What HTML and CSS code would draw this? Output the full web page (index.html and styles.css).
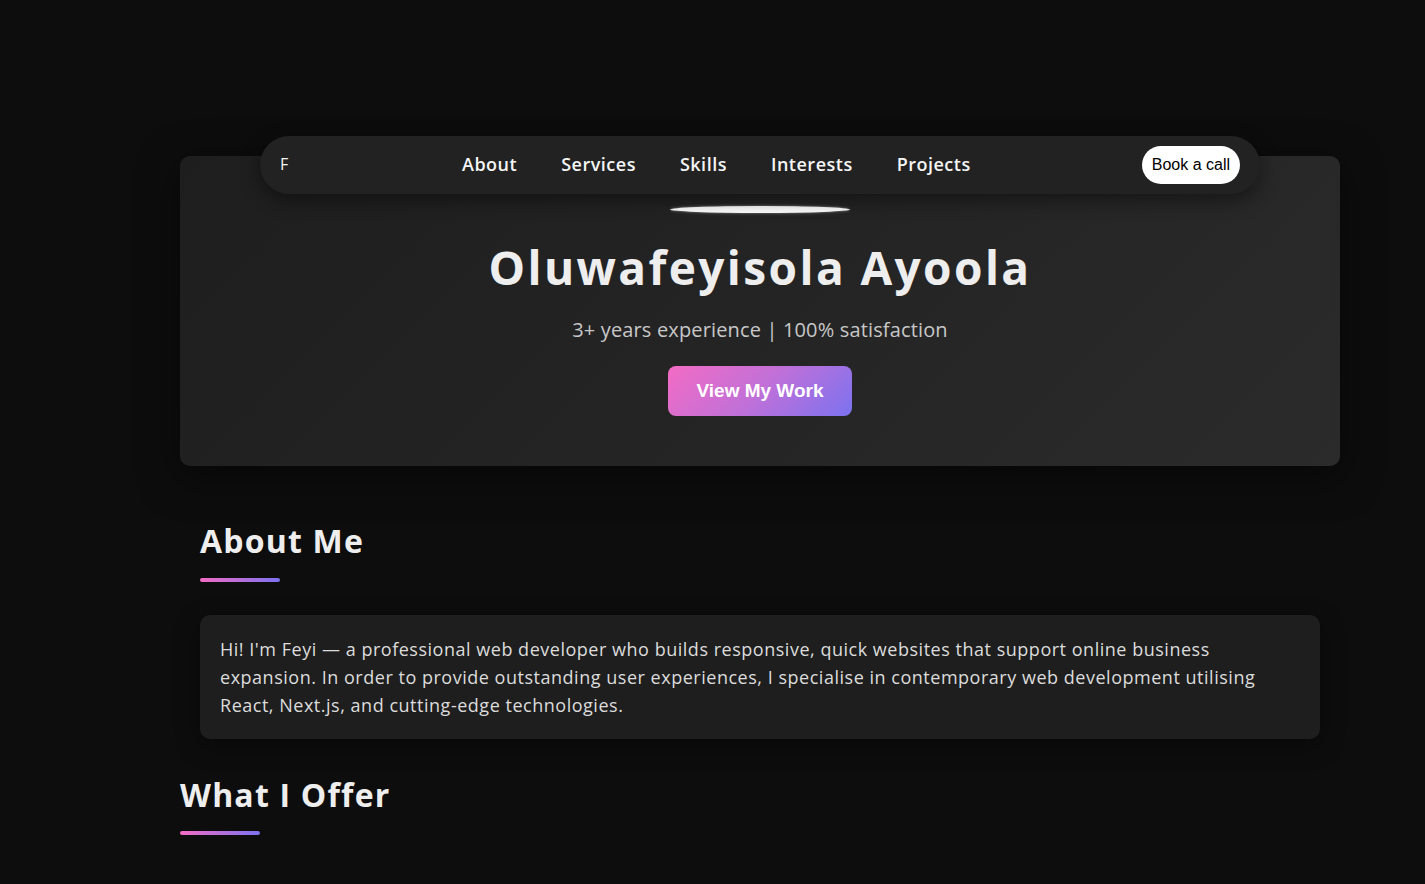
FILE: index.html
```html
<!DOCTYPE html>
<html lang="en">
<head>
<meta charset="utf-8">
<title>Oluwafeyisola Ayoola</title>
<link rel="stylesheet" href="styles.css">
</head>
<body>
<main class="page">
  <section class="hero">
    <nav class="nav">
      <span class="logo">F</span>
      <ul class="links">
        <li><a href="#about">About</a></li>
        <li><a href="#services">Services</a></li>
        <li><a href="#skills">Skills</a></li>
        <li><a href="#interests">Interests</a></li>
        <li><a href="#projects">Projects</a></li>
      </ul>
      <a class="book" href="#call">Book a call</a>
    </nav>
    <div class="glow"></div>
    <h1 class="title">Oluwafeyisola Ayoola</h1>
    <p class="sub">3+ years experience | 100% satisfaction</p>
    <a class="cta" href="#projects">View My Work</a>
  </section>

  <section class="about" id="about">
    <h2 class="heading">About Me</h2>
    <div class="bar"></div>
    <div class="card">
      <p>Hi! I'm Feyi — a professional web developer who builds responsive, quick websites that support online business<br>expansion. In order to provide outstanding user experiences, I specialise in contemporary web development utilising<br>React, Next.js, and cutting-edge technologies.</p>
    </div>
  </section>

  <section class="offer" id="services">
    <h2 class="heading">What I Offer</h2>
    <div class="bar"></div>
  </section>
</main>
</body>
</html>
```

FILE: styles.css
```css
* { box-sizing: border-box; }
html, body { margin: 0; padding: 0; }
body {
  background: #0d0d0d;
  color: #f0f0f0;
  font-family: "Open Sans", "DejaVu Sans", sans-serif;
  overflow: hidden;
}
.page {
  padding: 156px 0 0 180px;
  width: 1340px;
}
.hero {
  position: relative;
  width: 1160px;
  height: 310px;
  border-radius: 10px;
  background: linear-gradient(135deg, #1e1e1e 0%, #242424 50%, #2b2b2b 100%);
  box-shadow: 0 10px 40px rgba(0,0,0,0.5);
  display: flex;
  flex-direction: column;
  align-items: center;
  padding-top: 50px;
}
.nav {
  position: absolute;
  top: -20px;
  left: 80px;
  width: 1000px;
  height: 58px;
  border-radius: 29px;
  background: #222222;
  box-shadow: 0 6px 20px rgba(0,0,0,0.45);
  display: flex;
  align-items: center;
  padding: 0 20px;
}
.logo {
  font-size: 16px;
  font-weight: 500;
  color: #f5f5f5;
  width: 182px;
  margin-top: -2px;
}
.links {
  list-style: none;
  margin: -3px 0 0;
  padding: 0;
  display: flex;
  gap: 44px;
}
.links a {
  color: #f5f5f5;
  text-decoration: none;
  font-size: 18px;
  letter-spacing: 0.5px;
  font-weight: 600;
}
.book {
  margin-left: auto;
  background: #fff;
  color: #000;
  font-family: "Liberation Sans", Arial, sans-serif;
  font-size: 16px;
  text-decoration: none;
  height: 38px;
  padding: 0 10px;
  border-radius: 19px;
  display: flex;
  align-items: center;
}
.glow {
  width: 180px;
  height: 7px;
  border-radius: 50%;
  background: #fff;
  box-shadow: 0 0 3px rgba(255,255,255,0.5);
}
.title {
  margin: 26px 0 0;
  font-size: 46px;
  font-weight: 700;
  line-height: 56px;
  letter-spacing: 2.4px;
  color: #eeeeee;
}
.sub {
  margin: 22px 0 0;
  font-size: 20px;
  letter-spacing: 0.15px;
  line-height: 26px;
  color: #c8c8c8;
}
.cta {
  margin-top: 23px;
  width: 184px;
  height: 50px;
  border-radius: 8px;
  background: linear-gradient(135deg, #f36cc4 0%, #c070d8 50%, #7c72f0 100%);
  color: #fff;
  font-family: "Liberation Sans", Arial, sans-serif;
  font-weight: 700;
  font-size: 19px;
  text-decoration: none;
  display: flex;
  align-items: center;
  justify-content: center;
}
.about {
  padding: 55px 20px 0;
  width: 1160px;
}
.heading {
  margin: 0;
  font-size: 32px;
  line-height: 40px;
  letter-spacing: 1.2px;
  font-weight: 700;
  color: #eeeeee;
}
.bar {
  margin-top: 17px;
  width: 80px;
  height: 4px;
  border-radius: 2px;
  background: linear-gradient(90deg, #f36cc4, #7c72f0);
}
.card {
  margin-top: 33px;
  background: #1e1e1e;
  border-radius: 10px;
  padding: 20px 20px;
  box-shadow: 0 6px 24px rgba(0,0,0,0.4);
}
.card p {
  margin: 0;
  font-size: 18px;
  letter-spacing: 0.52px;
  line-height: 28px;
  color: #dcdcdc;
}
.offer {
  padding-top: 36px;
}
.offer .bar {
  margin-top: 16px;
}
```
